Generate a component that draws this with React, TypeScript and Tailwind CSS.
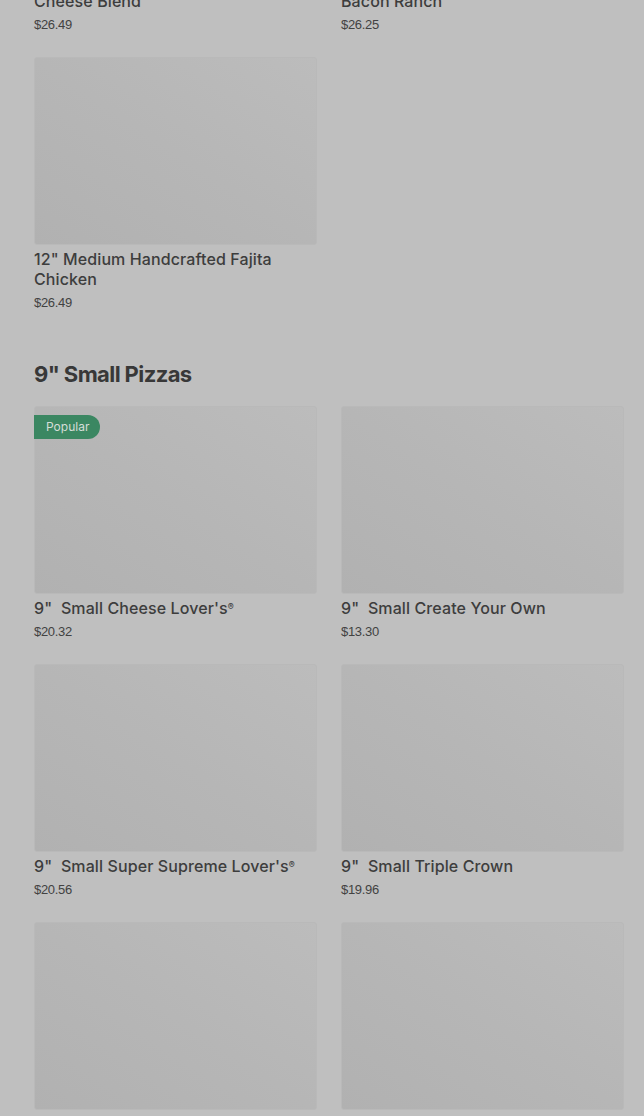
import { ReactNode } from "react"

interface Item {
  name: ReactNode
  price: string
  popular?: boolean
}

const topRow: Item[] = [
  { name: <>12" Medium Handcrafted Three Cheese Blend</>, price: "$26.49" },
  { name: <>12" Medium Handcrafted Chicken Bacon Ranch</>, price: "$26.25" },
]

const medium: Item[] = [
  { name: <>12" Medium Handcrafted Fajita Chicken</>, price: "$26.49" },
]

const small: Item[] = [
  { name: <>9"&nbsp; Small Cheese Lover's<sup className="text-[9px]">®</sup></>, price: "$20.32", popular: true },
  { name: <>9"&nbsp; Small Create Your Own</>, price: "$13.30" },
  { name: <>9"&nbsp; Small Super Supreme Lover's<sup className="text-[9px]">®</sup></>, price: "$20.56" },
  { name: <>9"&nbsp; Small Triple Crown</>, price: "$19.96" },
  { name: <>9"&nbsp; Small Pepperoni Lover's<sup className="text-[9px]">®</sup></>, price: "$20.32" },
  { name: <>9"&nbsp; Small Meat Lover's<sup className="text-[9px]">®</sup></>, price: "$20.56" },
]

const ProductCard = ({ item }: { item: Item }) => (
  <div className="flex flex-col pb-[22px]">
    <div className="relative h-[188px] rounded-[3px] border border-[#b9b9b9] bg-gradient-to-tr from-[#b1b1b1] via-[#b6b6b6] to-[#bcbcbc]">
      {item.popular && (
        <span className="absolute left-[-1px] top-[8px] flex h-[24px] items-center rounded-r-full bg-[#3b8762] pl-[12px] pr-[11px] text-[12px] text-[#d5ddd8]">
          Popular
        </span>
      )}
    </div>
    <div className="mt-[4px] text-[16px] font-medium leading-[20px] tracking-[0.1px] text-[#3d3d3d]">
      {item.name}
    </div>
    <div className="mt-[4px] text-[13px] leading-[20px] tracking-[-0.3px] text-[#424242] [font-family:'Liberation_Sans',sans-serif]">
      {item.price}
    </div>
  </div>
)

const Grid = ({ items }: { items: Item[] }) => (
  <div className="grid grid-cols-2 gap-x-[24px]">
    {items.map((item, i) => (
      <ProductCard item={item} key={i} />
    ))}
  </div>
)

const App = () => {
  return (
    <div className="h-[1116px] overflow-hidden bg-[#bfbfbf] [font-family:Inter,'Liberation_Sans',sans-serif]">
      <div className="-mt-[221px] pl-[34px] pr-[20px]">
        <Grid items={topRow} />
        <Grid items={medium} />

        <h2 className="mt-[23px] mb-[16px] text-[22px] font-bold leading-[32px] tracking-[-0.6px] text-[#383838]">
          9" Small Pizzas
        </h2>
        <Grid items={small} />
      </div>
    </div>
  )
}

export default App
